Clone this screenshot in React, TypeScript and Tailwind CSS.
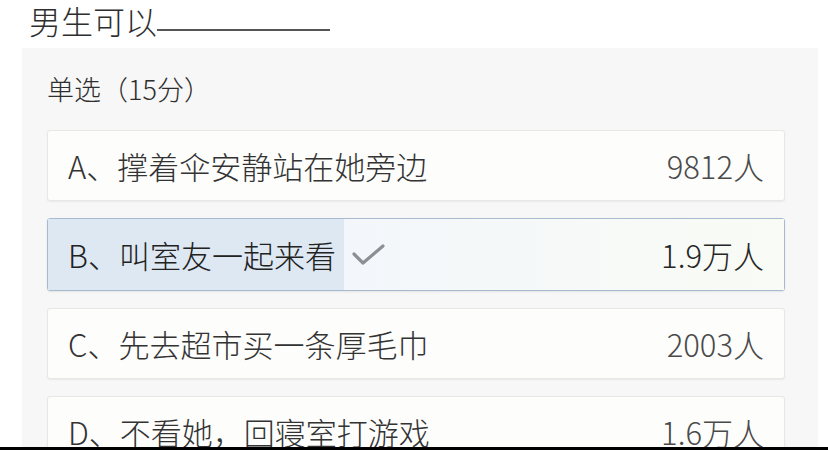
import React from 'react';

type Option = {
    label: string;
    text: string;
    count: string;
    selected?: boolean;
};

const options: Option[] = [
    { label: 'A', text: '撑着伞安静站在她旁边', count: '9812人' },
    { label: 'B', text: '叫室友一起来看', count: '1.9万人', selected: true },
    { label: 'C', text: '先去超市买一条厚毛巾', count: '2003人' },
    { label: 'D', text: '不看她，回寝室打游戏', count: '1.6万人' },
];

const CheckMark: React.FC = () => (
    <svg width="34" height="24" viewBox="0 0 34 24" className="ml-[8px]">
        <path d="M2 11 L11 20 L31 3" fill="none" stroke="#8a9096" strokeWidth="3.2" strokeLinecap="round" strokeLinejoin="round" />
    </svg>
);

const OptionRow: React.FC<{ option: Option }> = ({ option }) => {
    if (option.selected) {
        return (
            <div className="flex h-[73px] shrink-0 items-stretch rounded-[3px] border border-[#a6bbd0] bg-[#f8fbf6] shadow-[0_1px_2px_rgba(0,0,0,0.08)]">
                <div className="flex items-center bg-[#dde8f3] pl-[20px] pr-[8px] text-[#222]">
                    <span>{option.label}、{option.text}</span>
                </div>
                <div className="flex flex-1 items-center bg-gradient-to-r from-[#f3f7fb] to-[#f9fbf5] pr-[20px]">
                    <CheckMark />
                    <span className="ml-auto text-[#262626]">{option.count}</span>
                </div>
            </div>
        );
    }
    return (
        <div className="flex h-[71px] shrink-0 items-center justify-between rounded-[3px] border border-[#e6e8e6] bg-[#fdfdfc] px-[20px] shadow-[0_1px_2px_rgba(0,0,0,0.06)]">
            <span className="text-[#333]">{option.label}、{option.text}</span>
            <span className="text-[#4a4a4a]">{option.count}</span>
        </div>
    );
};

const App: React.FC = () => {
    return (
        <div className="flex h-[450px] w-[828px] flex-col overflow-hidden bg-white font-light font-['Noto_Sans_CJK_SC','Noto_Sans',sans-serif]">
            <div className="flex flex-1 flex-col overflow-hidden">
                <div className="flex h-[48px] shrink-0 items-start pl-[29px]">
                    <span className="text-[32px] leading-[40px] text-[#2e2e2e]">男生可以</span>
                    <span className="mt-[29px] inline-block w-[173px] border-b-2 border-[#555]" />
                </div>
                <div className="ml-[22px] mr-[10px] flex flex-1 flex-col bg-[#f7f7f7] pl-[25px] pr-[33px]">
                    <div className="flex h-[82px] shrink-0 items-center pb-[2px]">
                        <span className="text-[27px] leading-none text-[#2e2e2e]">单选（15分）</span>
                    </div>
                    <div className="flex flex-col gap-[17px] text-[31px] leading-none">
                        {options.map((o) => (
                            <OptionRow key={o.label} option={o} />
                        ))}
                    </div>
                </div>
            </div>
            <div className="h-[3px] shrink-0 bg-black" />
        </div>
    );
};

export default App;
